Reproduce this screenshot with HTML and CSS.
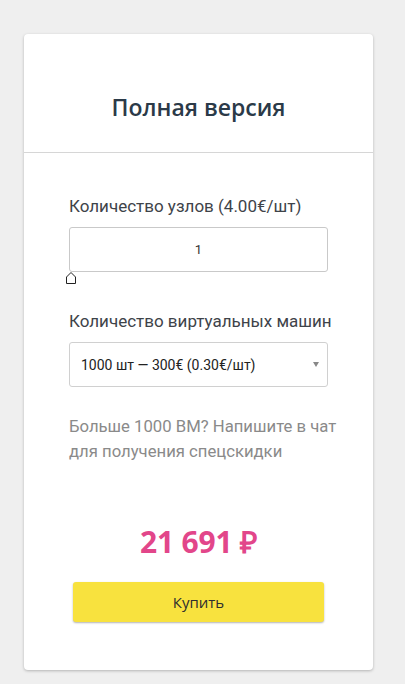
FILE: index.html
```html
<!DOCTYPE html>
<html lang="ru">
<head>
<meta charset="utf-8">
<link rel="stylesheet" href="styles.css">
</head>
<body>
<div class="card">
  <div class="card-head">
    <h1 class="title">Полная версия</h1>
  </div>
  <div class="card-body">
    <div class="field">
      <label class="label">Количество узлов (4.00€/шт)</label>
      <div class="input-wrap">
        <div class="input">1</div>
        <svg class="thumb" width="12" height="13" viewBox="0 0 12 13"><path d="M1.5 12.5 V6 L6 1.5 L10.5 6 V12.5 Z" fill="#fff" stroke="#222" stroke-width="1"/></svg>
      </div>
    </div>
    <div class="field field-2">
      <label class="label">Количество виртуальных машин</label>
      <div class="select">
        <span>1000 шт — 300€ (0.30€/шт)</span>
        <span class="arrow"></span>
      </div>
    </div>
    <p class="hint">Больше 1000 ВМ? Напишите в чат<br>для получения спецскидки</p>
    <div class="price">21 691 ₽</div>
    <div class="buy-wrap"><button class="buy">Купить</button></div>
  </div>
</div>
</body>
</html>
```
FILE: styles.css
```css
html, body { margin: 0; padding: 0; }
body {
  background: #efefef;
  font-family: Roboto, "Noto Sans", sans-serif;
  width: 405px;
  height: 684px;
  overflow: hidden;
}
.card {
  margin: 34px 0 0 24px;
  width: 349px;
  height: 636px;
  background: #fff;
  border-radius: 4px;
  box-shadow: 0 1px 3px rgba(0,0,0,0.25);
  box-sizing: border-box;
}
.card-head {
  height: 119px;
  border-bottom: 1px solid #d6d6d6;
  box-sizing: border-box;
  padding-top: 58px;
}
.title {
  margin: 0;
  text-align: center;
  font-family: "Open Sans", sans-serif;
  font-weight: 600;
  font-size: 23px;
  line-height: 30px;
  color: #2b3a48;
}
.card-body {
  padding: 43px 45px 0 45px;
}
.field { display: flex; flex-direction: column; }
.field-2 { margin-top: 39px; }
.label {
  font-size: 17px;
  line-height: 20px;
  color: #3e4349;
  margin-bottom: 11px;
  white-space: nowrap;
}
.input-wrap { position: relative; }
.input {
  height: 45px;
  box-sizing: border-box;
  border: 1px solid #c9c9c9;
  border-radius: 3px;
  display: flex;
  align-items: center;
  justify-content: center;
  font-size: 13px;
  color: #333;
}
.thumb {
  position: absolute;
  left: -4px;
  top: 44px;
}
.select {
  height: 45px;
  box-sizing: border-box;
  border: 1px solid #d0d0d0;
  border-radius: 3px;
  display: flex;
  align-items: center;
  justify-content: space-between;
  padding: 0 8px 0 11px;
  font-size: 14px;
  color: #222;
}
.arrow {
  width: 0; height: 0;
  border-left: 3px solid transparent;
  border-right: 3px solid transparent;
  border-top: 5px solid #888;
}
.hint {
  margin: 27px 0 0 0;
  font-size: 16.7px;
  line-height: 25px;
  color: #8a8a8a;
  white-space: nowrap;
}
.price {
  margin-top: 60px;
  text-align: center;
  font-family: "Open Sans", sans-serif;
  font-weight: 700;
  font-size: 30px;
  line-height: 36px;
  color: #e2468a;
  letter-spacing: -0.2px;
}
.buy-wrap { display: flex; justify-content: center; margin-top: 22px; }
.buy {
  width: 251px;
  height: 40px;
  border: none;
  border-radius: 3px;
  background: #f8e23e;
  box-shadow: 0 1px 2px rgba(0,0,0,0.3);
  font-family: "Open Sans", sans-serif;
  font-size: 15px;
  color: #2e2e2e;
  cursor: pointer;
}
```
